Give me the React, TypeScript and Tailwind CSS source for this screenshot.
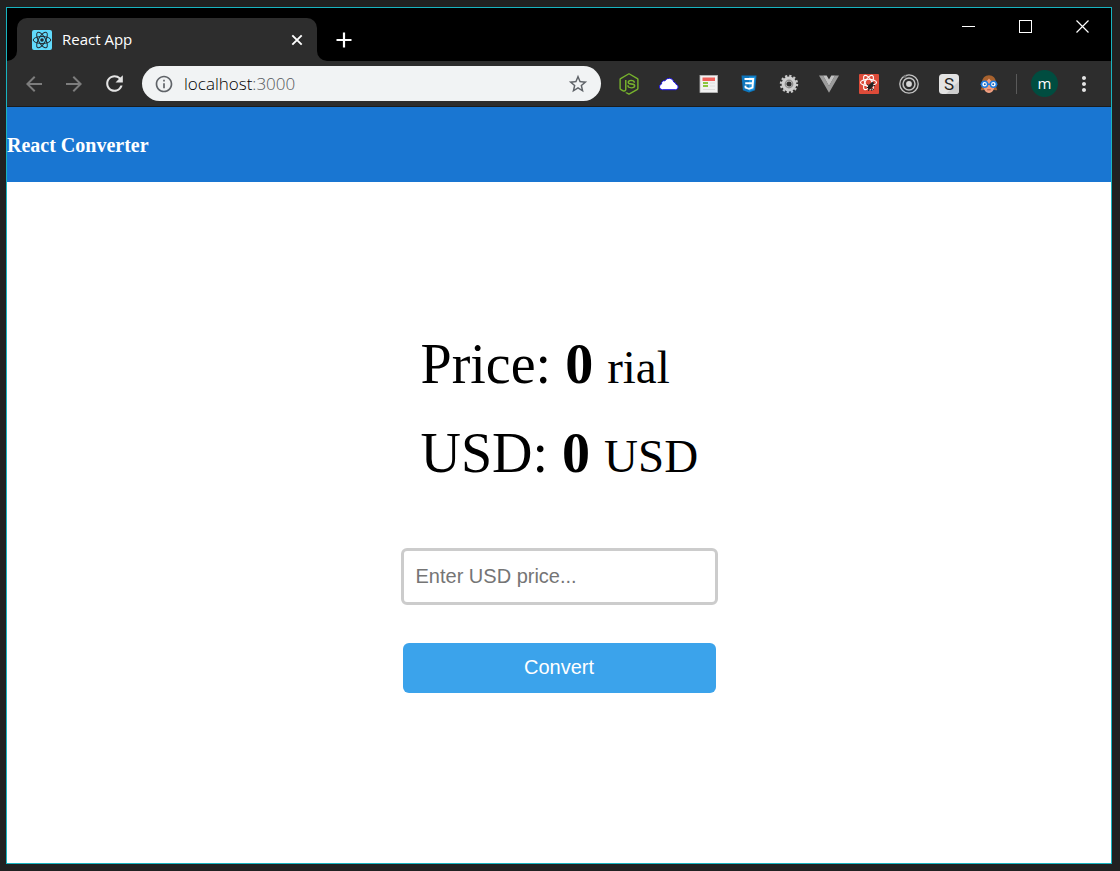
import React, { useState } from 'react';
import {
  MdArrowBack,
  MdArrowForward,
  MdInfoOutline,
  MdMoreVert,
  MdRefresh,
  MdStarBorder,
} from 'react-icons/md';
import { FaNodeJs } from 'react-icons/fa';

const RIAL_PER_USD = 42000;

const ReactIcon = () => (
  <svg viewBox="0 0 20 20" className="h-5 w-5">
    <rect width="20" height="20" rx="2" fill="#61dafb" />
    <g fill="none" stroke="#222c33" strokeWidth="1">
      <ellipse cx="10" cy="10" rx="8.8" ry="3.5" />
      <ellipse cx="10" cy="10" rx="8.8" ry="3.5" transform="rotate(60 10 10)" />
      <ellipse cx="10" cy="10" rx="8.8" ry="3.5" transform="rotate(120 10 10)" />
    </g>
    <circle cx="10" cy="10" r="1.8" fill="#222c33" />
  </svg>
);

const CloudIcon = () => (
  <svg viewBox="0 0 20 20" className="h-5 w-5">
    <path
      d="M3.4 15.7a2.9 2.9 0 0 1-.8-5.7 2.7 2.7 0 0 1 3.4-3.2 4.7 4.7 0 0 1 8.8 1.2 2.6 2.6 0 0 1 2.2 2.3 2.75 2.75 0 0 1-.2 5.4z"
      fill="#fff"
      stroke="#1f14e6"
      strokeWidth="1"
    />
  </svg>
);

const PageIcon = () => (
  <svg viewBox="0 0 20 20" className="h-5 w-5">
    <rect x="1" y="1.5" width="17.5" height="17" fill="#f1f1f1" stroke="#b9b9b9" strokeWidth=".8" />
    <rect x="3.5" y="3.5" width="12.5" height="3.5" fill="#f0605a" />
    <path d="M4 9h5M4 12h5" stroke="#8cc63f" strokeWidth="1.8" />
    <path d="M11 9h5M11 12h5M4 15.5h12" stroke="#ddd" strokeWidth="1.2" />
  </svg>
);

const CssIcon = () => (
  <svg viewBox="0 0 20 20" className="h-5 w-5">
    <path d="M2.5 1.5h15l-1.4 14.8L10 18.5l-6.1-2.2z" fill="#0e76bd" />
    <path d="M10 2.7h6.2L15 15.4l-5 1.8z" fill="#2196e0" />
    <path
      d="M5.5 5h8.7l-.7 8.6-3.5 1.2-3.4-1.2-.2-2M6.2 9.2h7.5"
      fill="none"
      stroke="#fff"
      strokeWidth="1.9"
    />
  </svg>
);

const GearIcon = () => (
  <svg viewBox="0 0 20 20" className="h-5 w-5">
    <circle cx="10" cy="10" r="8" fill="none" stroke="#c9c9c9" strokeWidth="2.4" strokeDasharray="2.2 1.99" />
    <circle cx="10" cy="10" r="5" fill="none" stroke="#cfcfcf" strokeWidth="4.8" />
    <circle cx="10" cy="10" r="3.7" fill="none" stroke="#8d8d8d" strokeWidth="1.4" />
  </svg>
);

const VueIcon = () => (
  <svg viewBox="0 0 20 20" className="h-5 w-5">
    <path d="M0 1.5h4L10 12l6-10.5h4L10 18.8z" fill="#9c9c9c" />
    <path d="M4 1.5h3.7L10 5.5l2.3-4H16L10 12z" fill="#c2c2c2" />
  </svg>
);

const ReactBugIcon = () => (
  <svg viewBox="0 0 20 20" className="h-5 w-5">
    <rect width="20" height="20" rx="1" fill="#dd4b39" />
    <g fill="none" stroke="#fff" strokeWidth="1.1">
      <ellipse cx="9.5" cy="8.5" rx="8" ry="3.3" />
      <ellipse cx="9.5" cy="8.5" rx="8" ry="3.3" transform="rotate(60 9.5 8.5)" />
      <ellipse cx="9.5" cy="8.5" rx="8" ry="3.3" transform="rotate(120 9.5 8.5)" />
    </g>
    <g stroke="#222" strokeWidth="1" fill="#222">
      <ellipse cx="11.5" cy="12.2" rx="1.5" ry="3" transform="rotate(35 11.5 12.2)" />
      <circle cx="13.5" cy="9.3" r="1" />
      <path d="M8 10.5l3 1.5M8 13.5h2.5M9.5 17l.5-3M12.5 12l3.5-.5M12.5 14.5l2.5 1M12 15l1 2" />
    </g>
  </svg>
);

const TargetIcon = () => (
  <svg viewBox="0 0 20 20" className="h-5 w-5">
    <g fill="none" stroke="#c4c4c4">
      <circle cx="10" cy="10" r="9.2" strokeWidth="1.3" />
      <circle cx="10" cy="10" r="6" strokeWidth="1.5" />
    </g>
    <circle cx="10" cy="10" r="2.9" fill="#d6d6d6" />
    <circle cx="6" cy="2.3" r="1.5" fill="#777" />
  </svg>
);

const SIcon = () => (
  <svg viewBox="0 0 20 20" className="h-5 w-5">
    <rect width="20" height="20" rx="3.5" fill="#e3e3e3" />
    <path d="M20 7v9.5a3.5 3.5 0 0 1-3.5 3.5H7z" fill="#cdcdcd" />
    <text x="10" y="16" textAnchor="middle" fontFamily="Roboto, sans-serif" fontSize="17" fill="#222">
      S
    </text>
  </svg>
);

const FaceIcon = () => (
  <svg viewBox="0 0 20 20" className="h-5 w-5">
    <path
      d="M3 9C3 4 6 1.2 10 1.2S17 4 17 9c0 3.5.5 5.5 1.3 7-1.5.6-2.8.3-3.8-.5h-9c-1 .8-2.3 1.1-3.8.5C2.5 14.5 3 12.5 3 9z"
      fill="#a8622e"
    />
    <path d="M4 8.5c2-.5 4.5-1.5 6-4 1.5 2.5 4 3.5 6 4 0 6.5-2.5 10.5-6 10.5S4 15 4 8.5z" fill="#ef9f80" />
    <g fill="#fff" stroke="#1c7be0" strokeWidth="1.5">
      <circle cx="5.6" cy="10.3" r="3" />
      <circle cx="14.4" cy="10.3" r="3" />
    </g>
    <path d="M8.5 10.3h3M1.5 10.3h1.2M17.3 10.3h1.2" stroke="#1c7be0" strokeWidth="1.5" />
    <circle cx="5.8" cy="10.3" r="1" fill="#1f5fae" />
    <circle cx="14.2" cy="10.3" r="1" fill="#1f5fae" />
    <path d="M8.2 15.8h3.6" stroke="#b5523c" strokeWidth="1" />
  </svg>
);

const extensions = [
  { name: 'Node', icon: <FaNodeJs className="h-[22px] w-[22px] text-[#77b32d]" /> },
  { name: 'Cloud', icon: <CloudIcon /> },
  { name: 'Page', icon: <PageIcon /> },
  { name: 'CSS', icon: <CssIcon /> },
  { name: 'Settings', icon: <GearIcon /> },
  { name: 'Vue', icon: <VueIcon /> },
  { name: 'React', icon: <ReactBugIcon /> },
  { name: 'Target', icon: <TargetIcon /> },
  { name: 'Stylus', icon: <SIcon /> },
  { name: 'Reader', icon: <FaceIcon /> },
];

const TabStrip: React.FC = () => (
  <div className="flex items-end bg-black">
    <span className="h-2.5 w-2.5 bg-[#2d2d2d]">
      <span className="block h-full rounded-br-[10px] bg-black" />
    </span>
    <div className="mt-2.5 flex h-[43px] w-[300px] items-center rounded-t-[10px] bg-[#2d2d2d] pr-3 pl-[15px]">
      <ReactIcon />
      <span className="ml-2.5 flex-1 text-[15px] text-white">React App</span>
      <button aria-label="Close tab">
        <svg viewBox="0 0 16 16" className="h-4 w-4" stroke="#fff" strokeWidth="1.9">
          <path d="M3.3 3.3l9.4 9.4M12.7 3.3l-9.4 9.4" />
        </svg>
      </button>
    </div>
    <span className="h-2.5 w-2.5 bg-[#2d2d2d]">
      <span className="block h-full rounded-bl-[10px] bg-black" />
    </span>
    <button aria-label="New tab" className="flex h-[43px] w-[34px] items-center justify-center">
      <svg viewBox="0 0 16 16" className="h-4 w-4" stroke="#fff" strokeWidth="2.2">
        <path d="M8 .5v15M.5 8h15" />
      </svg>
    </button>
    <div className="ml-auto flex self-start">
      <button aria-label="Minimize" className="flex h-9 w-[57px] items-center justify-center">
        <span className="h-px w-[13px] bg-white" />
      </button>
      <button aria-label="Maximize" className="flex h-9 w-[57px] items-center justify-center">
        <span className="h-[13px] w-[13px] border border-white" />
      </button>
      <button aria-label="Close" className="flex h-9 w-[57px] items-center justify-center">
        <svg viewBox="0 0 13 13" className="h-[13px] w-[13px]" stroke="#fff" strokeWidth="1.2">
          <path d="M.5.5l12 12M12.5.5l-12 12" />
        </svg>
      </button>
    </div>
  </div>
);

const Toolbar: React.FC = () => (
  <div className="flex h-[46px] items-center border-b border-[#1c1c1c] bg-[#2d2d2d] px-[7px]">
    <button aria-label="Back" className="flex w-10 justify-center text-[#7d7d7d]">
      <MdArrowBack size={24} />
    </button>
    <button aria-label="Forward" className="flex w-10 justify-center text-[#7d7d7d]">
      <MdArrowForward size={24} />
    </button>
    <button aria-label="Reload" className="flex w-10 justify-center text-[#e4e4e4]">
      <MdRefresh size={25} />
    </button>
    <div className="mx-2 flex h-[35px] flex-1 items-center rounded-full bg-[#f1f3f4] px-3">
      <MdInfoOutline size={20} className="text-[#5f6368]" />
      <span className="ml-2.5 flex-1 text-[17px] font-light text-black">
        localhost<span className="text-[#55585c]">:3000</span>
      </span>
      <button aria-label="Bookmark" className="text-[#5f6368]">
        <MdStarBorder size={22} />
      </button>
    </div>
    {extensions.map((ext) => (
      <button key={ext.name} aria-label={ext.name} className="flex w-10 justify-center">
        {ext.icon}
      </button>
    ))}
    <span className="mr-2 ml-[7px] h-5 w-px bg-[#5a5a5a]" />
    <button className="ml-1.5 flex h-[27px] w-[27px] items-center justify-center rounded-full bg-[#004d40] text-[15px] text-white">
      m
    </button>
    <button aria-label="Menu" className="ml-1.5 flex w-10 justify-center text-[#e4e4e4]">
      <MdMoreVert size={24} />
    </button>
  </div>
);

const Converter: React.FC = () => {
  const [value, setValue] = useState('');
  const [usd, setUsd] = useState(0);

  const handleSubmit = (e: React.FormEvent) => {
    e.preventDefault();
    setUsd(Number(value) || 0);
  };

  return (
    <main className="flex flex-1 justify-center bg-white pt-[150px] pb-10">
      <form onSubmit={handleSubmit} className="flex w-[317px] flex-col items-center">
        <div className="flex w-full flex-col gap-[25px] pl-5 font-['Liberation_Serif',serif] text-[56px] leading-[64px] whitespace-nowrap text-black">
          <p>
            Price: <b>{usd * RIAL_PER_USD}</b> <small className="text-[47px] leading-none">rial</small>
          </p>
          <p>
            USD: <b>{usd}</b> <small className="text-[47px] leading-none">USD</small>
          </p>
        </div>
        <input
          type="text"
          aria-label="USD price"
          placeholder="Enter USD price..."
          value={value}
          onChange={(e) => setValue(e.target.value)}
          className="mt-[63px] h-[57px] w-full rounded-md border-[3px] border-[#ccc] px-3 font-['Liberation_Sans',sans-serif] text-xl text-black placeholder:text-[#757575]"
        />
        <button
          type="submit"
          className="mt-[38px] h-[50px] w-[313px] rounded-md bg-[#3ba3eb] pb-0.5 font-['Liberation_Sans',sans-serif] text-xl text-white"
        >
          Convert
        </button>
      </form>
    </main>
  );
};

const App: React.FC = () => {
  return (
    <div className="flex min-h-screen flex-col bg-[#212121] pt-[7px] pr-2 pb-[7px] pl-1.5 font-['Open_Sans',sans-serif]">
      <div className="flex flex-1 flex-col border border-[#18b4c0]">
        <TabStrip />
        <Toolbar />
        <header className="flex h-[75px] items-center bg-[#1976d2]">
          <h3 className="font-['Liberation_Serif',serif] text-xl font-bold text-white">React Converter</h3>
        </header>
        <Converter />
      </div>
    </div>
  );
};

export default App;
